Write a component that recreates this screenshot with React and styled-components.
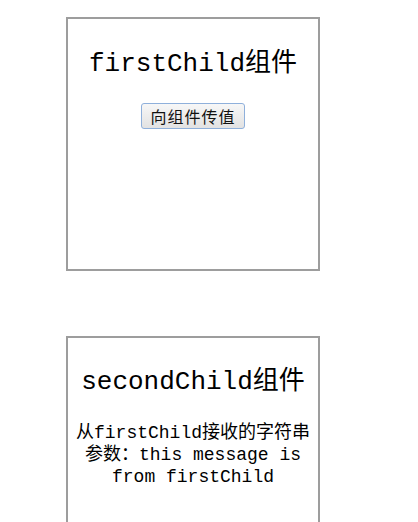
import React from 'react';
import styled, { createGlobalStyle } from 'styled-components';

const GlobalStyle = createGlobalStyle`
    body {
        margin: 0;
        background: #fff;
        color: #000;
        font-family: "Liberation Mono", "Noto Sans CJK SC", monospace;
    }
`;

const Page = styled.div`
    display: flex;
    flex-direction: column;
    align-items: flex-start;
    gap: 65px;
    padding: 17px 0 0 66px;
`;

const Panel = styled.div`
    box-sizing: border-box;
    width: 254px;
    height: 254px;
    border: 2px solid #9d9d9d;
    display: flex;
    flex-direction: column;
    align-items: center;
    text-align: center;
`;

const Title = styled.h2`
    margin: ${(p) => p.$top}px 0 0;
    font-family: "Liberation Mono", "Noto Sans CJK SC", monospace;
    font-size: 26px;
    font-weight: normal;
    line-height: 30px;
    white-space: nowrap;
`;

const SendButton = styled.button`
    margin-top: 24px;
    height: 26px;
    padding: 0 8px;
    font-family: "Noto Sans CJK SC", sans-serif;
    font-size: 16px;
    line-height: 24px;
    letter-spacing: 1px;
    color: #111;
    border: 1px solid #8fb0db;
    border-radius: 3px;
    background: linear-gradient(#f7f7f7, #e2e2e2);
`;

const Message = styled.p`
    margin: 25px 0 0;
    width: 250px;
    font-family: "Liberation Mono", "Noto Sans CJK SC", monospace;
    font-size: 18px;
    line-height: 22px;
`;

function FirstChild() {
    return (
        <Panel>
            <Title $top={30}>firstChild组件</Title>
            <SendButton>向组件传值</SendButton>
        </Panel>
    );
}

function SecondChild() {
    return (
        <Panel>
            <Title $top={29}>secondChild组件</Title>
            <Message>从firstChild接收的字符串参数：this message is from firstChild</Message>
        </Panel>
    );
}

export default function App() {
    return (
        <>
            <GlobalStyle />
            <Page>
                <FirstChild />
                <SecondChild />
            </Page>
        </>
    );
}
